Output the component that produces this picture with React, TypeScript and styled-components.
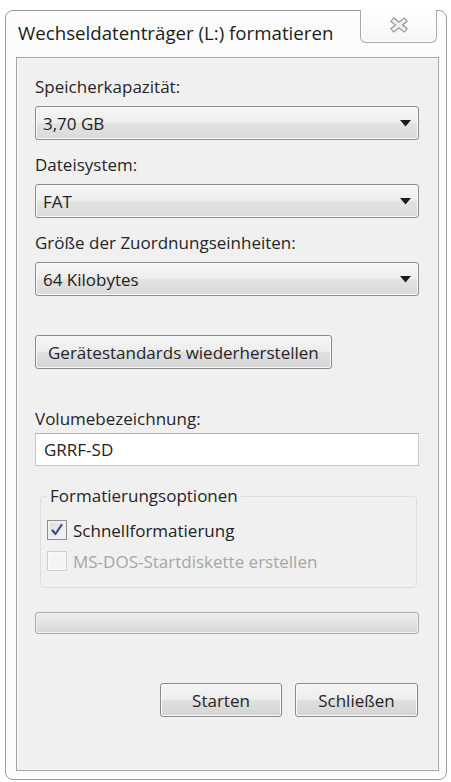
import React from "react";
import styled, { createGlobalStyle } from "styled-components";

const GlobalStyle = createGlobalStyle`
  html, body {
    margin: 0;
    padding: 0;
    background: #ffffff;
  }
  body {
    font-family: "Open Sans", "Noto Sans", "DejaVu Sans", sans-serif;
    color: #222;
  }
  * { box-sizing: border-box; }
`;

const Window = styled.div`
  margin: 10px 0 0 5px;
  width: 442px;
  height: 770px;
  border: 1px solid #9c9c9c;
  border-radius: 8px;
  background: #fcfcfc;
  box-shadow: inset 0 0 0 1px #ffffff;
  display: flex;
  flex-direction: column;
`;

const TitleBar = styled.div`
  height: 46px;
  display: flex;
  justify-content: space-between;
  align-items: flex-start;
  padding: 0 9px 0 12px;
`;

const Title = styled.div`
  margin-top: 10px;
  font-size: 18.7px;
  line-height: 24px;
  color: #1c1c1c;
  white-space: nowrap;
`;

const CloseButton = styled.div`
  margin-top: -1px;
  width: 77px;
  height: 33px;
  border: 1px solid #a8a8a8;
  border-top: none;
  border-radius: 0 0 6px 6px;
  background: linear-gradient(#ffffff, #f6f6f6);
  box-shadow: inset 0 0 0 1px #ffffff;
  display: flex;
  align-items: center;
  justify-content: center;
  padding-bottom: 2px;
`;

const Panel = styled.div`
  flex: 1;
  margin: 0 7px 8px 10px;
  border: 1px solid #a3a3a3;
  background: #f0f0f0;
  box-shadow: inset 0 0 0 1px #f8f8f8;
  padding: 18px 19px 0 18px;
  display: flex;
  flex-direction: column;
`;

const Label = styled.div<{ $mt?: number; $mb?: number }>`
  font-size: 17px;
  line-height: 22px;
  color: #262626;
  margin-top: ${(p) => p.$mt ?? 0}px;
  margin-bottom: ${(p) => p.$mb ?? 8}px;
  white-space: nowrap;
`;

const Select = styled.div`
  height: 34px;
  border: 1px solid #8c8c8c;
  border-radius: 3px;
  background: linear-gradient(#f5f5f5 0%, #eeeeee 48%, #e2e2e2 52%, #dadada 100%);
  box-shadow: inset 0 0 0 1px #fbfbfb;
  display: flex;
  align-items: center;
  justify-content: space-between;
  padding: 0 7px 0 7px;
  font-size: 17px;
  color: #222;
  margin-bottom: 14px;
`;

const Button = styled.div<{ $w?: number; $mt?: number }>`
  height: 34px;
  width: ${(p) => (p.$w ? `${p.$w}px` : "auto")};
  margin-top: ${(p) => p.$mt ?? 0}px;
  align-self: flex-start;
  border: 1px solid #8a8a8a;
  border-radius: 3px;
  background: linear-gradient(#f5f5f5 0%, #ededed 48%, #dfdfdf 52%, #d5d5d5 100%);
  box-shadow: inset 0 0 0 1px #fafafa;
  display: flex;
  align-items: center;
  justify-content: center;
  padding: 0 12px;
  font-size: 17px;
  color: #262626;
  white-space: nowrap;
`;

const TextInput = styled.div`
  height: 33px;
  border: 1px solid #c8c8c8;
  border-top-color: #b0b0b0;
  background: #ffffff;
  display: flex;
  align-items: center;
  padding: 0 8px;
  font-size: 17px;
  color: #222;
`;

const GroupBox = styled.fieldset`
  margin: 19px 2px 0 5px;
  padding: 8px 6px 11px 6px;
  border: 1px solid #dddddd;
  border-radius: 4px;
  min-width: 0;
  display: flex;
  flex-direction: column;
  gap: 1px;
`;

const Legend = styled.legend`
  padding: 0 3px;
  font-size: 17px;
  line-height: 22px;
  color: #262626;
`;

const CheckRow = styled.div<{ $disabled?: boolean }>`
  height: 30px;
  display: flex;
  align-items: center;
  gap: 6px;
  font-size: 17px;
  color: ${(p) => (p.$disabled ? "#a6a6a6" : "#222")};
  white-space: nowrap;
`;

const Box = styled.div<{ $disabled?: boolean }>`
  width: 20px;
  height: 20px;
  border: 1px solid ${(p) => (p.$disabled ? "#cfcfcf" : "#8e8f8f")};
  background: ${(p) =>
    p.$disabled ? "#f4f4f4" : "linear-gradient(135deg, #dcdcdc, #f6f6f6)"};
  box-shadow: inset 0 0 0 2px ${(p) => (p.$disabled ? "#f7f7f7" : "#f0f0f0")};
  display: flex;
  align-items: center;
  justify-content: center;
`;

const Progress = styled.div`
  margin-top: 24px;
  height: 22px;
  border: 1px solid #a9a9a9;
  border-radius: 3px;
  background: linear-gradient(#ececec 0%, #e2e2e2 50%, #d6d6d6 100%);
  box-shadow: inset 0 0 0 1px #f2f2f2;
`;

const ButtonRow = styled.div`
  margin-top: 49px;
  display: flex;
  justify-content: flex-end;
  gap: 13px;
  padding-right: 1px;
`;

const Arrow = () => (
  <svg width="11" height="7" viewBox="0 0 11 7">
    <path d="M0 0 L11 0 L5.5 6.5 Z" fill="#1a1a1a" />
  </svg>
);

const CloseGlyph = () => (
  <svg width="22" height="16" viewBox="0 0 22 16">
    <g strokeLinecap="square">
      <line x1="6" y1="4" x2="16" y2="12" stroke="#8a8a8a" strokeWidth="5.5" />
      <line x1="16" y1="4" x2="6" y2="12" stroke="#8a8a8a" strokeWidth="5.5" />
      <line x1="6" y1="4" x2="16" y2="12" stroke="#eeeeee" strokeWidth="3.5" />
      <line x1="16" y1="4" x2="6" y2="12" stroke="#eeeeee" strokeWidth="3.5" />
    </g>
  </svg>
);

const CheckMark = () => (
  <svg width="14" height="14" viewBox="0 0 14 14">
    <path
      d="M2.5 7.5 L5.5 11 L11.5 2"
      fill="none"
      stroke="#3d4f86"
      strokeWidth="2.2"
      strokeLinecap="round"
      strokeLinejoin="round"
    />
  </svg>
);

export default function App() {
  return (
    <>
      <GlobalStyle />
      <Window>
        <TitleBar>
          <Title>Wechseldatenträger (L:) formatieren</Title>
          <CloseButton>
            <CloseGlyph />
          </CloseButton>
        </TitleBar>
        <Panel>
          <Label>Speicherkapazität:</Label>
          <Select>
            <span>3,70 GB</span>
            <Arrow />
          </Select>
          <Label>Dateisystem:</Label>
          <Select>
            <span>FAT</span>
            <Arrow />
          </Select>
          <Label>Größe der Zuordnungseinheiten:</Label>
          <Select>
            <span>64 Kilobytes</span>
            <Arrow />
          </Select>
          <Button $mt={25}>Gerätestandards wiederherstellen</Button>
          <Label $mt={39} $mb={3}>
            Volumebezeichnung:
          </Label>
          <TextInput>GRRF-SD</TextInput>
          <GroupBox>
            <Legend>Formatierungsoptionen</Legend>
            <CheckRow>
              <Box>
                <CheckMark />
              </Box>
              Schnellformatierung
            </CheckRow>
            <CheckRow $disabled>
              <Box $disabled />
              MS-DOS-Startdiskette erstellen
            </CheckRow>
          </GroupBox>
          <Progress />
          <ButtonRow>
            <Button $w={122}>Starten</Button>
            <Button $w={123}>Schließen</Button>
          </ButtonRow>
        </Panel>
      </Window>
    </>
  );
}
